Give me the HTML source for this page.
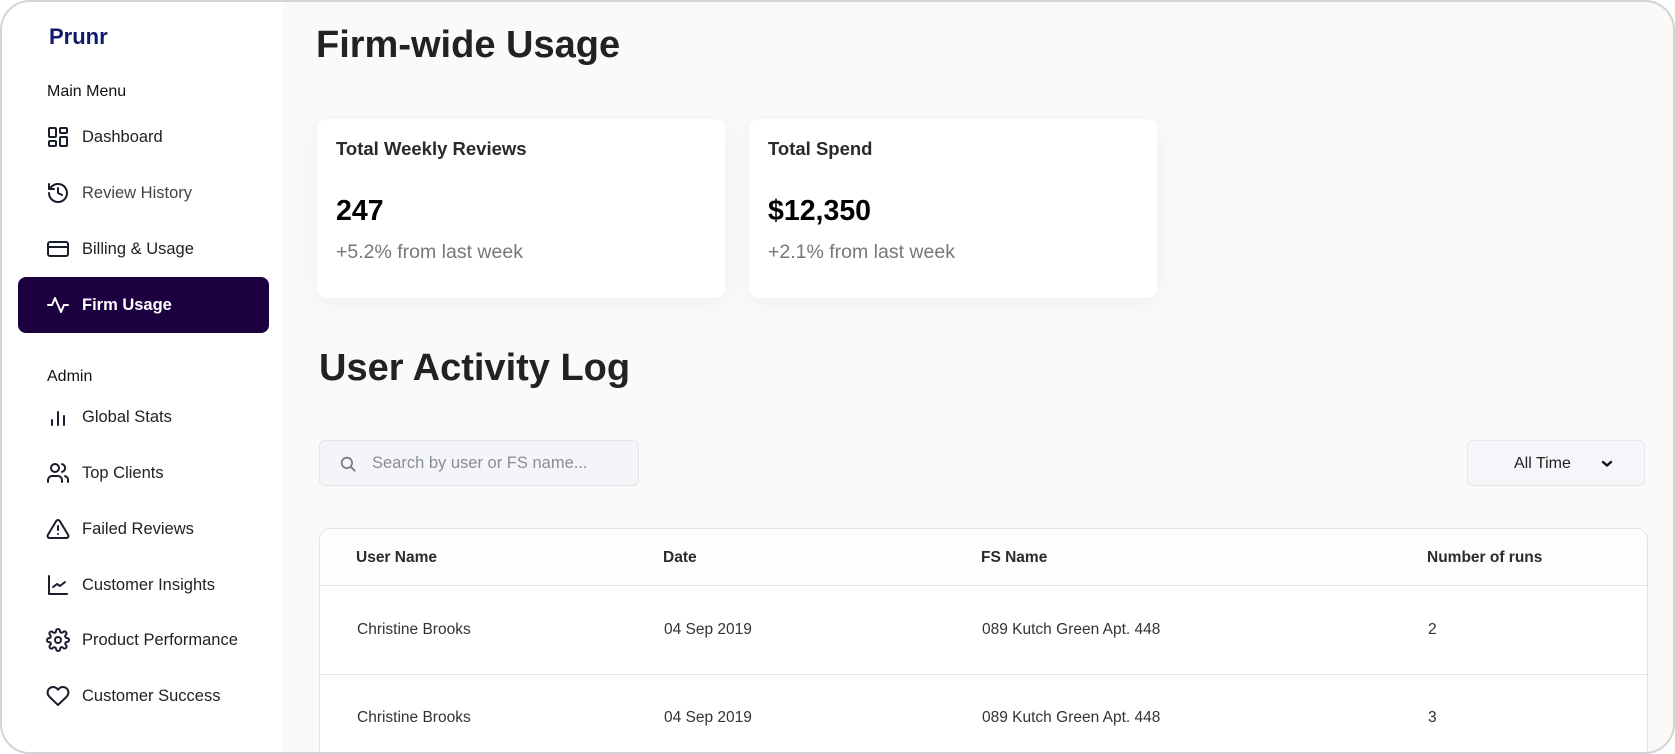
<!DOCTYPE html>
<html><head><meta charset="utf-8"><style>
*{margin:0;padding:0;box-sizing:border-box}
body{width:1675px;height:754px;background:#fff;font-family:"Liberation Sans",sans-serif;overflow:hidden;position:relative}
.frame{position:absolute;left:0;top:0;width:1675px;height:754px;border:2px solid #d4d4d4;border-radius:30px;overflow:hidden;background:#fbfaf8}
.side{position:absolute;left:0;top:0;width:281px;height:754px;background:#fff}
.abs{position:absolute}
.logo{left:47px;top:22px;font-size:22px;font-weight:700;color:#0f1a6e}
.sec{left:45px;font-size:16px;color:#111}
.item{position:absolute;left:44px;height:24px;display:flex;align-items:center;font-size:16.5px;color:#222}
.item svg{width:24px;height:24px;margin-right:12px;fill:none;stroke:#1a1d2b;stroke-width:2;stroke-linecap:round;stroke-linejoin:round}
.active{position:absolute;left:16px;top:275px;width:251px;height:56px;background:#1d0040;border-radius:8px}
.h1{font-size:38px;font-weight:700;color:#222}
.card{position:absolute;top:117px;width:408px;height:179px;background:#fff;border-radius:10px;box-shadow:0 4px 24px rgba(0,0,0,0.05)}
.card .t{position:absolute;left:19px;top:19px;font-size:18.5px;font-weight:700;color:#2a2a2a}
.card .v{position:absolute;left:19px;top:76px;font-size:28.5px;font-weight:700;color:#000}
.card .s{position:absolute;left:19px;top:122px;font-size:19.5px;color:#777}
.search{left:317px;top:438px;width:320px;height:46px;background:#f4f5f9;border:1px solid #e2e4ea;border-radius:6px}
.drop{left:1465px;top:438px;width:178px;height:46px;background:#f5f6f9;border:1px solid #e5e6ea;border-radius:6px}
.table{left:317px;top:526px;width:1329px;height:240px;background:#fff;border:1px solid #e3e3e3;border-radius:12px;overflow:hidden}
.thead{position:absolute;left:0;top:0;width:100%;height:57px;background:#fcfdfd;border-bottom:1px solid #e3e3e3}
.c{position:absolute;font-size:15.5px;color:#333}
.hd{font-weight:700;color:#2b2b2b;top:20px}
.row{position:absolute;left:0;width:100%;height:89px;border-bottom:1px solid #e3e3e3}
</style></head><body><div class="frame">
<div class="side">
<div class="abs logo">Prunr</div>
<div class="abs sec" style="top:81px">Main Menu</div>
<div class="item" style="top:123px"><svg viewBox="0 0 24 24"><rect x="3" y="3" width="7" height="9" rx="1"/><rect x="14" y="3" width="7" height="5" rx="1"/><rect x="14" y="12" width="7" height="9" rx="1"/><rect x="3" y="16" width="7" height="5" rx="1"/></svg>Dashboard</div>
<div class="item" style="top:179px;color:#444"><svg viewBox="0 0 24 24"><path d="M3 12a9 9 0 1 0 3-6.7L3 8"/><path d="M3 3v5h5"/><path d="M12 7v5l4 2"/></svg>Review History</div>
<div class="item" style="top:235px"><svg viewBox="0 0 24 24"><rect x="2" y="5" width="20" height="14" rx="2"/><path d="M2 10h20"/></svg>Billing &amp; Usage</div>
<div class="active"></div>
<div class="item" style="top:291px;color:#fff;font-weight:700"><svg viewBox="0 0 24 24" style="stroke:#fff"><path d="M2 12h4l3-7 6 14 3-7h4"/></svg>Firm Usage</div>
<div class="abs sec" style="top:366px">Admin</div>
<div class="item" style="top:403px"><svg viewBox="0 0 24 24"><path d="M6 20v-5M12 20V7M18 20V11"/></svg>Global Stats</div>
<div class="item" style="top:459px"><svg viewBox="0 0 24 24"><circle cx="9" cy="7" r="4"/><path d="M2 21v-2a4 4 0 0 1 4-4h6a4 4 0 0 1 4 4v2"/><path d="M16 3.1a4 4 0 0 1 0 7.8M22 21v-2a4 4 0 0 0-3-3.9"/></svg>Top Clients</div>
<div class="item" style="top:515px"><svg viewBox="0 0 24 24"><path d="M10.3 3.9 1.8 18a2 2 0 0 0 1.7 3h17a2 2 0 0 0 1.7-3L13.7 3.9a2 2 0 0 0-3.4 0z"/><path d="M12 9v4M12 17h.01"/></svg>Failed Reviews</div>
<div class="item" style="top:571px"><svg viewBox="0 0 24 24"><path d="M3 3v18h18"/><path d="M7 14l4-3 3 2 5-4"/></svg>Customer Insights</div>
<div class="item" style="top:626px"><svg viewBox="0 0 24 24"><circle cx="12" cy="12" r="3"/><path d="M19.4 15a1.7 1.7 0 0 0 .3 1.8l.1.1a2 2 0 1 1-2.8 2.8l-.1-.1a1.7 1.7 0 0 0-1.8-.3 1.7 1.7 0 0 0-1 1.5V21a2 2 0 1 1-4 0v-.1a1.7 1.7 0 0 0-1.1-1.5 1.7 1.7 0 0 0-1.8.3l-.1.1a2 2 0 1 1-2.8-2.8l.1-.1a1.7 1.7 0 0 0 .3-1.8 1.7 1.7 0 0 0-1.5-1H3a2 2 0 1 1 0-4h.1a1.7 1.7 0 0 0 1.5-1.1 1.7 1.7 0 0 0-.3-1.800l-.1-.1a2 2 0 1 1 2.8-2.8l.1.1a1.7 1.7 0 0 0 1.8.3H9a1.7 1.7 0 0 0 1-1.5V3a2 2 0 1 1 4 0v.1a1.7 1.7 0 0 0 1 1.5 1.7 1.7 0 0 0 1.8-.3l.1-.1a2 2 0 1 1 2.8 2.8l-.1.1a1.7 1.7 0 0 0-.3 1.8V9a1.7 1.7 0 0 0 1.5 1H21a2 2 0 1 1 0 4h-.1a1.7 1.7 0 0 0-1.5 1z"/></svg>Product Performance</div>
<div class="item" style="top:682px"><svg viewBox="0 0 24 24"><path d="M20.8 4.6a5.5 5.5 0 0 0-7.8 0L12 5.7l-1-1.1a5.5 5.5 0 0 0-7.8 7.8l1 1.1L12 21l7.8-7.5 1-1.1a5.5 5.5 0 0 0 0-7.8z"/></svg>Customer Success</div>
</div>
<div class="abs h1" style="left:314px;top:22px">Firm-wide Usage</div>
<div class="card" style="left:315px"><div class="t">Total Weekly Reviews</div><div class="v">247</div><div class="s">+5.2% from last week</div></div>
<div class="card" style="left:747px"><div class="t">Total Spend</div><div class="v">$12,350</div><div class="s">+2.1% from last week</div></div>
<div class="abs h1" style="left:317px;top:345px">User Activity Log</div>
<div class="abs search"><svg style="position:absolute;left:19px;top:14px" width="18" height="18" viewBox="0 0 24 24" fill="none" stroke="#777" stroke-width="2.2" stroke-linecap="round"><circle cx="10.5" cy="10.5" r="7"/><path d="M16 16l5 5"/></svg><span style="position:absolute;left:52px;top:13px;font-size:16.5px;color:#8a8d94">Search by user or FS name...</span></div>
<div class="abs drop"><span style="position:absolute;left:46px;top:14px;font-size:16px;color:#222">All Time</span><svg style="position:absolute;left:132px;top:18px" width="14" height="10" viewBox="0 0 14 10" fill="none" stroke="#111" stroke-width="2.4" stroke-linecap="round" stroke-linejoin="round"><path d="M3 3l4 3.5L11 3"/></svg></div>
<div class="abs table">
<div class="thead"><span class="c hd" style="left:36px">User Name</span><span class="c hd" style="left:343px">Date</span><span class="c hd" style="left:661px">FS Name</span><span class="c hd" style="left:1107px">Number of runs</span></div>
<div class="row" style="top:57px"><span class="c" style="left:37px;top:35px">Christine Brooks</span><span class="c" style="left:344px;top:35px">04 Sep 2019</span><span class="c" style="left:662px;top:35px">089 Kutch Green Apt. 448</span><span class="c" style="left:1108px;top:35px">2</span></div>
<div class="row" style="top:146px;border:none"><span class="c" style="left:37px;top:34px">Christine Brooks</span><span class="c" style="left:344px;top:34px">04 Sep 2019</span><span class="c" style="left:662px;top:34px">089 Kutch Green Apt. 448</span><span class="c" style="left:1108px;top:34px">3</span></div>
</div>
</div></body></html>
